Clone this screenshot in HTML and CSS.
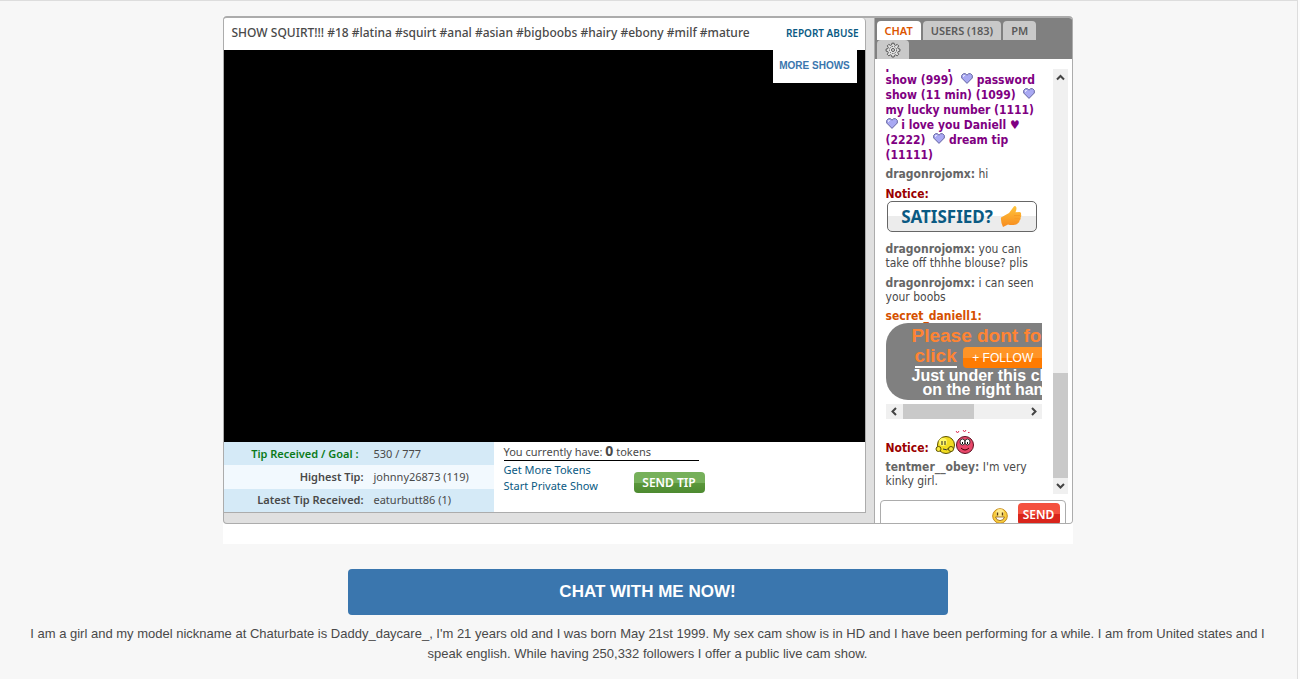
FILE: index.html
```
<!DOCTYPE html>
<html lang="en">
<head>
<meta charset="utf-8">
<title>Live cam show</title>
<link rel="stylesheet" href="styles.css">
</head>
<body>
<svg class="defs" width="0" height="0" aria-hidden="true">
  <symbol id="heart" viewBox="0 0 12 11">
    <path d="M6 10.4 L.7 5 V2.4 L2.4.7 H4.4 L6 2.2 L7.6.7 H9.6 L11.3 2.4 V5Z" fill="#a9a9f3" stroke="#6464a0"/>
    <path d="M2.5 4V2.5H4" fill="none" stroke="#e4e4ff"/>
  </symbol>
</svg>
<main class="page">
  <div class="frame">
    <div class="shell">
      <section class="show">
        <header class="show-head">
          <h1 class="subject">SHOW SQUIRT!!! #18 #latina #squirt #anal #asian #bigboobs #hairy #ebony #milf #mature</h1>
          <a class="report" href="#">REPORT ABUSE</a>
        </header>
        <div class="video"><a class="more" href="#">MORE SHOWS</a></div>
        <div class="info">
          <table class="tips">
            <tr class="goal"><th scope="row">Tip Received / Goal :</th><td>530 / 777</td></tr>
            <tr><th scope="row">Highest Tip:</th><td>johnny26873 (119)</td></tr>
            <tr><th scope="row">Latest Tip Received:</th><td>eaturbutt86 (1)</td></tr>
          </table>
          <div class="tokens">
            <div class="balance">You currently have: <b>0</b> tokens</div>
            <div class="actions">
              <div class="links"><a href="#">Get More Tokens</a><a href="#">Start Private Show</a></div>
              <button class="send-tip" type="button">SEND TIP</button>
            </div>
          </div>
        </div>
      </section>
      <aside class="chat">
        <nav class="tabs">
          <button class="tab active" type="button">CHAT</button>
          <button class="tab" type="button">USERS (183)</button>
          <button class="tab" type="button">PM</button>
          <button class="tab gear" type="button" aria-label="Settings">
            <svg width="16" height="16" viewBox="0 0 16 16" fill="none" stroke="#555">
              <path d="M6.900 1.200h2.200l.3 1.700 1.300.5 1.500-1 1.500 1.500-1 1.500.5 1.300 1.700.3v2.200l-1.700.3-.5 1.300 1 1.500-1.500 1.500-1.500-1-1.300.5-.3 1.700H6.900l-.3-1.700-1.300-.5-1.500 1-1.500-1.500 1-1.500-.5-1.300L1.100 9.200V7l1.700-.3.5-1.300-1-1.500 1.500-1.500 1.500 1 1.300-.5Z" fill="#e4e4e4"/>
              <circle cx="8" cy="8" r="3.600" stroke-dasharray="1.500 1"/><circle cx="8" cy="8" r="1.500"/>
            </svg>
          </button>
        </nav>
        <div class="log-row">
          <div class="log">
            <p class="menu">password photo<br>show (999) <svg class="heart"><use href="#heart"/></svg> password<br>show (11 min) (1099) <svg class="heart"><use href="#heart"/></svg><br>my lucky number (1111)<br><svg class="heart first"><use href="#heart"/></svg> i love you Daniell ♥<br>(2222) <svg class="heart"><use href="#heart"/></svg> dream tip<br>(11111)</p>
            <p class="msg single"><b>dragonrojomx:</b> hi</p>
            <p class="notice">Notice:</p>
            <div class="satisfied">SATISFIED?
              <svg width="22" height="23" viewBox="0 0 22 23">
                <defs><linearGradient id="thumb" x2="0" y2="1"><stop stop-color="#ffc43a"/><stop offset="1" stop-color="#f78b1f"/></linearGradient></defs>
                <path d="M1 12.5 L9 8 L13.5 2 Q15 .2 16.2 2 Q17 4 15.5 7.2 L19.5 7 Q21.5 7.3 21 9.2 Q21.7 11 20.6 12.4 Q21 14.3 19.6 15.6 Q19.6 17.6 17.7 18.2 Q17 20 13.5 20 Q10 20.2 8 19.5 L3 22 Q.5 17 1 12.5Z" fill="url(#thumb)"/>
                <path d="M14 10.5H20 M14.5 13.7H19.6 M14 16.8H18" stroke="#f79a25" fill="none"/>
              </svg>
            </div>
            <p class="msg"><b>dragonrojomx:</b> you can<br>take off thhhe blouse? plis</p>
            <p class="msg"><b>dragonrojomx:</b> i can seen<br>your boobs</p>
            <p class="owner">secret_daniell1:</p>
            <div class="banner">
              <div class="big">Please dont forget to</div>
              <div class="big follow-line"><u>click</u> <button class="follow" type="button">+ FOLLOW</button></div>
              <div class="small">Just under this chat</div>
              <div class="small inset">on the right hand</div>
            </div>
            <div class="hbar">
              <svg width="17" height="15" fill="none" stroke="#444" stroke-width="2"><path d="M10 4L6.500 7.500L10 11"/></svg>
              <span class="hthumb"></span>
              <svg width="17" height="15" fill="none" stroke="#444" stroke-width="2"><path d="M7 4L10.500 7.500L7 11"/></svg>
            </div>
            <p class="notice smiley">Notice:
              <svg width="40" height="25" viewBox="0 0 40 25">
                <circle cx="11" cy="15" r="8.500" fill="#f2dc20" stroke="#5c5200"/>
                <circle cx="8" cy="12" r="4" fill="#fff86a"/>
                <path d="M7 11v4M10 11v4" stroke="#222"/><path d="M8 19q4 2 6-1" stroke="#333" fill="none"/>
                <circle cx="3.500" cy="19" r="2.500" fill="#f8e840" stroke="#5c5200"/><circle cx="16" cy="19" r="2.500" fill="#f8e840" stroke="#5c5200"/>
                <circle cx="30" cy="15" r="8.500" fill="#e9476a" stroke="#5c1020"/>
                <ellipse cx="27.500" cy="12" rx="2.500" ry="3" fill="#fff" stroke="#333"/><ellipse cx="32.500" cy="12" rx="2.500" ry="3" fill="#fff" stroke="#333"/>
                <path d="M27 13h1M32 13h1" stroke="#000" stroke-width="2"/><path d="M26 18q4 4 8 0" stroke="#400" fill="none"/>
                <path d="M21 1l1.500 2L24 1M28 0l1.500 2L31 0M33 2.500h1.500" stroke="#e0355a" fill="none"/>
              </svg>
            </p>
            <p class="msg last"><b>tentmer__obey:</b> I'm very<br>kinky girl.</p>
          </div>
          <div class="vbar">
            <svg width="15" height="16" fill="none" stroke="#444" stroke-width="2"><path d="M4 10.500L7.500 7L11 10.500"/></svg>
            <span class="vthumb"></span>
            <svg width="15" height="16" fill="none" stroke="#444" stroke-width="2"><path d="M4 6L7.500 9.500L11 6"/></svg>
          </div>
        </div>
        <form class="compose">
          <input type="text" aria-label="Message">
          <svg width="16" height="16" viewBox="0 0 16 16">
            <circle cx="8" cy="8" r="7.300" fill="#f8cd3e" stroke="#c68a1c"/>
            <circle cx="8" cy="5" r="4" fill="#ffe98a"/>
            <path d="M5.500 4.500v3M10.500 4.500v3" stroke="#5a3a10" stroke-width="1.400"/>
            <path d="M3.500 9h9q-1 3.600-4.500 3.600T3.500 9Z" fill="#fff" stroke="#8a5a18" stroke-width=".8"/>
          </svg>
          <button class="send" type="button">SEND</button>
        </form>
      </aside>
    </div>
  </div>
  <a class="cta" href="#">CHAT WITH ME NOW!</a>
  <p class="bio">I am a girl and my model nickname at Chaturbate is Daddy_daycare_, I'm 21 years old and I was born May 21st 1999. My sex cam show is in HD and I have been performing for a while. I am from United states and I speak english. While having 250,332 followers I offer a public live cam show.</p>
</main>
</body>
</html>
```
FILE: styles.css
```
* { box-sizing: border-box; }
body { margin: 0; background: #fcfcfc; color: #494949; font-family: "Liberation Sans", Arial, sans-serif; }
p, h1 { margin: 0; }
a { text-decoration: none; }
button { border: 0; margin: 0; padding: 0; font-family: inherit; }
.defs { position: absolute; }
.page {
  margin-right: 2px; padding: 15px 2px 15px 0; min-height: 100vh;
  background: #f7f7f7; border-top: 1px solid #ddd; border-right: 1px solid #ddd;
  display: flex; flex-direction: column; align-items: center;
}
.frame { width: 100%; max-width: 850px; padding-bottom: 20px; background: #fff; }
.shell {
  display: flex; height: 508px; overflow: hidden;
  background: #e0e0e0; border: 1px solid #acacac; border-top-width: 2px; border-radius: 4px;
  font-family: "Noto Sans", sans-serif;
}
.show { flex: 1; min-width: 0; align-self: flex-start; margin-right: 8px; background: #fff; border: solid #acacac; border-width: 0 1px 1px 0; border-radius: 0 4px 0 0; }
.show-head { height: 32px; display: flex; justify-content: space-between; align-items: center; padding: 0 6px 2px 8px; white-space: nowrap; }
.subject { font: 500 12px/16px "Noto Sans", sans-serif; color: #494949; }
.report { font-size: 10px; font-weight: 600; color: #0a5a83; }
.video { height: 392px; background: #000; display: flex; justify-content: flex-end; align-items: flex-start; padding-right: 8px; }
.more { width: 84px; height: 33px; background: #fff; color: #3a76ae; font: bold 10px/31px "Liberation Sans", sans-serif; text-align: center; }
.info { display: flex; height: 70px; font-size: 11px; }
.tips { width: 270px; border-collapse: collapse; background: #d5eaf7; }
.tips tr:nth-child(2) { background: #f2f9fe; }
.tips th { width: 140px; padding: 0 0 1px; text-align: right; font-weight: 600; }
.tips td { padding: 0 0 1px 10px; }
.tips .goal th { color: #0a7a1a; padding-right: 5px; }
.tokens { padding: 0 0 0 10px; }
.balance { width: 195px; height: 19px; line-height: 18px; border-bottom: 1px solid #000; white-space: nowrap; }
.balance b { font-size: 14px; }
.actions { display: flex; align-items: flex-start; }
.links { width: 130px; display: flex; flex-direction: column; line-height: 16px; padding-top: 1px; }
.links a { color: #0a5a83; }
.send-tip { margin-top: 11px; width: 71px; height: 21px; border-radius: 4px; color: #fff; font-size: 12px; font-weight: 600; background: linear-gradient(#76b05a 50%, #5b983b 50%, #4d8a30); }
.chat { width: 198px; display: flex; flex-direction: column; background: #fff; border-left: 1px solid #acacac; }
.tabs { flex: none; height: 41px; padding: 3px 20px 0 2px; display: flex; flex-wrap: wrap; gap: 0 2px; background: #808080; align-content: flex-start; }
.tab { height: 19px; padding: 0 8px; border-radius: 4px 4px 0 0; background: #c9c9c9; color: #5a5a5a; font-size: 11px; font-weight: 600; }
.active { background: #fff; color: #dc5500; }
.gear { width: 32px; display: flex; align-items: center; }
.log-row { height: 425px; margin-top: 10px; padding: 0 4px 0 10px; display: flex; justify-content: space-between; flex: none; }
.log { width: 157px; display: flex; flex-direction: column; justify-content: flex-end; overflow: hidden; white-space: nowrap; font: 12px/14px "DejaVu Sans Condensed", Tahoma, sans-serif; padding: 0 0 6px 1px; }
.log > * { flex: none; }
.menu { color: #7f0082; font-weight: bold; font-size: 12px; line-height: 15px; }
.heart { width: 12px; height: 11px; margin-left: 4px; }
.heart.first { margin-left: 0; }
.single { margin-top: 4px; }
.msg { margin-bottom: 6px; }
.msg b { color: #666; }
.notice { color: #9b0000; font-weight: bold; }
.owner { color: #d55000; font-weight: bold; line-height: 13px; }
.satisfied { width: 150px; height: 31px; margin: 0 0 10px 1px; border: 1px solid #666; border-radius: 5px; display: flex; align-items: center; justify-content: center; gap: 7px; background: linear-gradient(#fff 50%, #ececec 50%); color: #0a5a83; font: bold 17px/20px "Noto Sans", sans-serif; }
.banner { height: 77px; margin: 0 0 4px; padding: 3px 0 0 26px; background: #808080; border-radius: 22px 0 0 22px; overflow: hidden; color: #fff; font: bold 16px/14px "Liberation Sans", sans-serif; }
.big { font-size: 19px; line-height: 20px; color: #ff8433; }
.follow-line { display: flex; align-items: flex-start; gap: 6px; padding-left: 3px; height: 23px; }
.follow-line u { text-decoration: none; border-bottom: 2px solid #fff; }
.follow { flex: none; width: 90px; height: 21px; margin-top: 1px; padding-right: 10px; border-radius: 4px; color: #fff; font-size: 12px; background: linear-gradient(#ff9426 50%, #ff7b00 50%); }
.small { line-height: 14px; }
.inset { padding-left: 11px; }
.hbar { height: 15px; display: flex; background: #f0f0f0; margin-bottom: 11px; }
.hthumb { width: 71px; background: #c9c9c9; margin-right: 51px; }
.smiley { display: flex; align-items: flex-end; gap: 6px; margin-bottom: 5px; }
.last { margin: 0; }
.vbar { width: 15px; background: #f0f0f0; display: flex; flex-direction: column; justify-content: flex-end; }
.vbar svg:first-child { margin-bottom: auto; }
.vthumb { height: 105px; background: #c9c9c9; }
.compose { flex: none; height: 40px; margin: 6px 6px 0 5px; padding: 2px 5px 0; border: 1px solid #acacac; border-radius: 4px; display: flex; align-items: flex-start; }
.compose svg { margin: 5px 10px 0 0; flex: none; }
.compose input { flex: 1; min-width: 0; height: 22px; border: 0; outline: 0; background: none; }
.send { width: 42px; height: 22px; border-radius: 4px; color: #fff; font-size: 12px; font-weight: 600; background: linear-gradient(#f4513f 52%, #d9251c 52%); }
.cta { width: calc(100% - 40px); max-width: 600px; margin-top: 25px; border-radius: 4px; background: #3a76ae; color: #fff; font-size: 17px; font-weight: bold; line-height: 46px; text-align: center; }
.bio { padding: 9px 20px; font-size: 13px; line-height: 20px; text-align: center; }
```
